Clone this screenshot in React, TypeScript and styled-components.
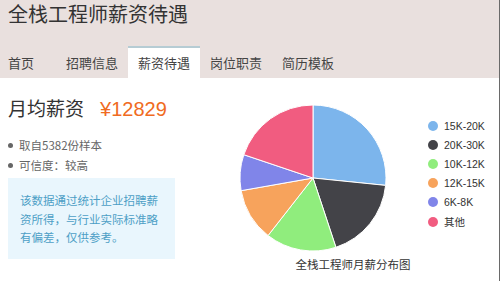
import React from 'react';
import styled, { createGlobalStyle } from 'styled-components';

const GlobalStyle = createGlobalStyle`
  html, body {
    margin: 0;
    padding: 0;
    background: #ffffff;
  }
  body {
    font-family: "Noto Sans CJK SC", "Noto Sans", sans-serif;
  }
`;

type Slice = { label: string; color: string; from: number; to: number };

const slices: Slice[] = [
  { label: '15K-20K', color: '#7cb5ec', from: 0, to: 95.8 },
  { label: '20K-30K', color: '#434348', from: 95.8, to: 161.7 },
  { label: '10K-12K', color: '#90ed7d', from: 161.7, to: 218 },
  { label: '12K-15K', color: '#f7a35c', from: 218, to: 260 },
  { label: '6K-8K', color: '#8085e9', from: 260, to: 288.6 },
  { label: '其他', color: '#f15c80', from: 288.6, to: 360 },
];

const tabs = ['首页', '招聘信息', '薪资待遇', '岗位职责', '简历模板'];

const CX = 75;
const CY = 75;
const R = 73;

const point = (deg: number) => {
  const a = (deg * Math.PI) / 180;
  return [CX + R * Math.sin(a), CY - R * Math.cos(a)];
};

const slicePath = (from: number, to: number) => {
  const [x1, y1] = point(from);
  const [x2, y2] = point(to);
  const large = to - from > 180 ? 1 : 0;
  return `M${CX},${CY} L${x1},${y1} A${R},${R} 0 ${large} 1 ${x2},${y2} Z`;
};

const App: React.FC = () => {
  return (
    <Page>
      <GlobalStyle />
      <Header>
        <Title>全栈工程师薪资待遇</Title>
        <TabBar>
          {tabs.map((t, i) => (
            <Tab key={t} $active={i === 2} $first={i === 0}>
              {t}
            </Tab>
          ))}
        </TabBar>
      </Header>
      <Main>
        <LeftCol>
          <Heading>
            月均薪资<Price>¥12829</Price>
          </Heading>
          <Facts>
            <Fact>取自5382份样本</Fact>
            <Fact>可信度：较高</Fact>
          </Facts>
          <Notice>该数据通过统计企业招聘薪资所得，与行业实际标准略有偏差，仅供参考。</Notice>
        </LeftCol>
        <ChartArea>
          <ChartRow>
            <svg width="150" height="150" viewBox="0 0 150 150">
              {slices.map((s) => (
                <path
                  key={s.label}
                  d={slicePath(s.from, s.to)}
                  fill={s.color}
                  stroke="#ffffff"
                  strokeWidth="1"
                  strokeLinejoin="round"
                />
              ))}
            </svg>
            <Legend>
              {slices.map((s) => (
                <LegendItem key={s.label}>
                  <Dot $color={s.color} />
                  {s.label}
                </LegendItem>
              ))}
            </Legend>
          </ChartRow>
          <Caption>全栈工程师月薪分布图</Caption>
        </ChartArea>
      </Main>
    </Page>
  );
};

const Page = styled.div`
  width: 500px;
  height: 281px;
  overflow: hidden;
  box-sizing: border-box;
  border-right: 1px solid #6a6a6a;
  background: #ffffff;
`;

const Header = styled.div`
  background: #e9e0de;
`;

const Title = styled.div`
  height: 46px;
  padding-left: 8px;
  font-size: 20px;
  line-height: 28px;
  color: #333333;
`;

const TabBar = styled.div`
  display: flex;
  height: 32px;
`;

const Tab = styled.div<{ $active?: boolean; $first?: boolean }>`
  box-sizing: border-box;
  width: ${({ $first }) => ($first ? '56px' : '72px')};
  padding-left: ${({ $first }) => ($first ? '8px' : '10px')};
  font-size: 13px;
  line-height: 30px;
  color: #444444;
  border-top: 2px solid ${({ $active }) => ($active ? '#b6ccd4' : 'transparent')};
  background: ${({ $active }) => ($active ? '#ffffff' : 'transparent')};
`;

const Main = styled.div`
  display: flex;
`;

const LeftCol = styled.div`
  width: 220px;
  box-sizing: border-box;
  padding: 18px 0 0 8px;
`;

const Heading = styled.div`
  display: flex;
  align-items: baseline;
  gap: 16px;
  font-size: 19px;
  line-height: 24px;
  color: #333333;
`;

const Price = styled.span`
  font-family: "Liberation Sans", "Noto Sans CJK SC", sans-serif;
  font-size: 20px;
  color: #f06b22;
`;

const Facts = styled.ul`
  list-style: none;
  margin: 14px 0 0;
  padding: 0;
`;

const Fact = styled.li`
  display: flex;
  align-items: center;
  gap: 6px;
  font-size: 11.5px;
  line-height: 20px;
  color: #666666;

  &::before {
    content: '';
    width: 5px;
    height: 5px;
    border-radius: 50%;
    background: #666666;
  }
`;

const Notice = styled.div`
  width: 167px;
  box-sizing: border-box;
  margin-top: 3px;
  padding: 13px 14px 12px 12px;
  background: #e9f6fd;
  color: #4d9fc6;
  font-size: 11.5px;
  line-height: 18.5px;
`;

const ChartArea = styled.div`
  width: 266px;
  display: flex;
  flex-direction: column;
  align-items: center;
`;

const ChartRow = styled.div`
  align-self: stretch;
  display: flex;
  padding: 25px 0 0 18px;

  svg {
    flex-shrink: 0;
  }
`;

const Legend = styled.ul`
  list-style: none;
  margin: 13px 0 0 40px;
  padding: 0;
`;

const LegendItem = styled.li`
  display: flex;
  align-items: center;
  gap: 6px;
  height: 19.2px;
  font-family: "Liberation Sans", "Noto Sans CJK SC", sans-serif;
  font-size: 10.5px;
  color: #333333;
`;

const Dot = styled.span<{ $color: string }>`
  width: 10px;
  height: 10px;
  border-radius: 50%;
  background: ${({ $color }) => $color};
`;

const Caption = styled.div`
  margin-top: 3px;
  font-size: 11.5px;
  line-height: 16px;
  color: #333333;
`;

export default App;
